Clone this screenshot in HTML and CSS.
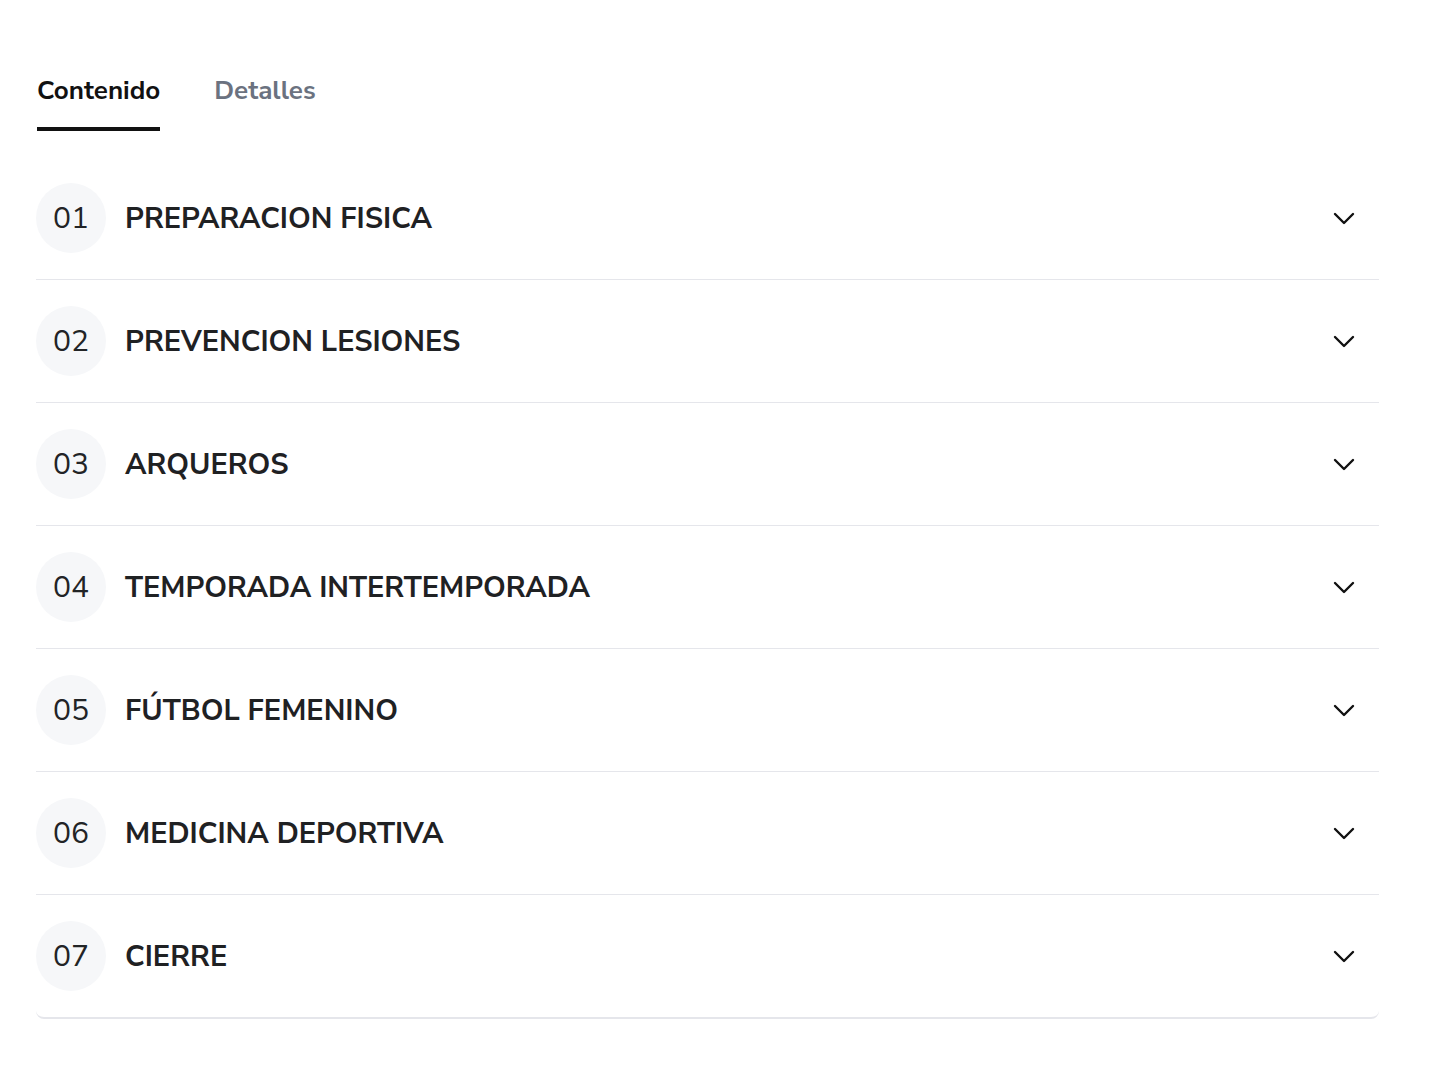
FILE: index.html
```html
<!DOCTYPE html>
<html lang="es">
<head>
    <meta charset="UTF-8">
    <meta name="viewport" content="width=device-width, initial-scale=1.0">
    <title>Contenido del curso</title>
    <link rel="stylesheet" href="styles.css">
</head>
<body>
    <div class="page">
        <div class="tabs">
            <div class="tab active">Contenido</div>
            <div class="tab">Detalles</div>
        </div>

        <div class="modules">
            <div class="module">
                <span class="num">01</span>
                <span class="title">PREPARACION FISICA</span>
                <svg class="chevron" viewBox="0 0 24 24"><path d="M3 8l9 9 9-9"/></svg>
            </div>
            <div class="module">
                <span class="num">02</span>
                <span class="title">PREVENCION LESIONES</span>
                <svg class="chevron" viewBox="0 0 24 24"><path d="M3 8l9 9 9-9"/></svg>
            </div>
            <div class="module">
                <span class="num">03</span>
                <span class="title">ARQUEROS</span>
                <svg class="chevron" viewBox="0 0 24 24"><path d="M3 8l9 9 9-9"/></svg>
            </div>
            <div class="module">
                <span class="num">04</span>
                <span class="title">TEMPORADA INTERTEMPORADA</span>
                <svg class="chevron" viewBox="0 0 24 24"><path d="M3 8l9 9 9-9"/></svg>
            </div>
            <div class="module">
                <span class="num">05</span>
                <span class="title">FÚTBOL FEMENINO</span>
                <svg class="chevron" viewBox="0 0 24 24"><path d="M3 8l9 9 9-9"/></svg>
            </div>
            <div class="module">
                <span class="num">06</span>
                <span class="title">MEDICINA DEPORTIVA</span>
                <svg class="chevron" viewBox="0 0 24 24"><path d="M3 8l9 9 9-9"/></svg>
            </div>
            <div class="module">
                <span class="num">07</span>
                <span class="title">CIERRE</span>
                <svg class="chevron" viewBox="0 0 24 24"><path d="M3 8l9 9 9-9"/></svg>
            </div>
        </div>
    </div>
</body>
</html>
```
FILE: styles.css
```css
body {
    margin: 0;
    background-color: #ffffff;
    font-family: "Nunito Sans", Lato, "Open Sans", sans-serif;
    color: #1f2123;
}

.page {
    width: 1343px;
    padding: 71px 0 0 36px;
}

.tabs {
    display: flex;
    gap: 54px;
    margin-bottom: 26px;
}

.tab {
    font-size: 26px;
    font-weight: 700;
    color: #6b7280;
    line-height: 40px;
    padding-bottom: 16px;
    border-bottom: 4px solid transparent;
}

.tab.active {
    color: #111111;
    border-bottom-color: #111111;
    margin-left: 1px;
}

.modules {
    border-radius: 8px;
}

.module {
    display: flex;
    align-items: center;
    padding: 26px 23px 26px 0;
    border-bottom: 1px solid #e5e6eb;
}

.module:last-child {
    border-radius: 0 0 8px 8px;
    border-bottom-width: 2px;
}

.num {
    width: 70px;
    height: 70px;
    border-radius: 50%;
    background-color: #f6f7f9;
    display: flex;
    align-items: center;
    justify-content: center;
    font-size: 30px;
    font-weight: 400;
    color: #222426;
    flex-shrink: 0;
}

.title {
    flex-grow: 1;
    margin-left: 19px;
    font-size: 29px;
    font-weight: 700;
    color: #1f2123;
}

.chevron {
    width: 24px;
    height: 24px;
    fill: none;
    stroke: #111111;
    stroke-width: 2.4;
    stroke-linecap: round;
    stroke-linejoin: round;
}
```
